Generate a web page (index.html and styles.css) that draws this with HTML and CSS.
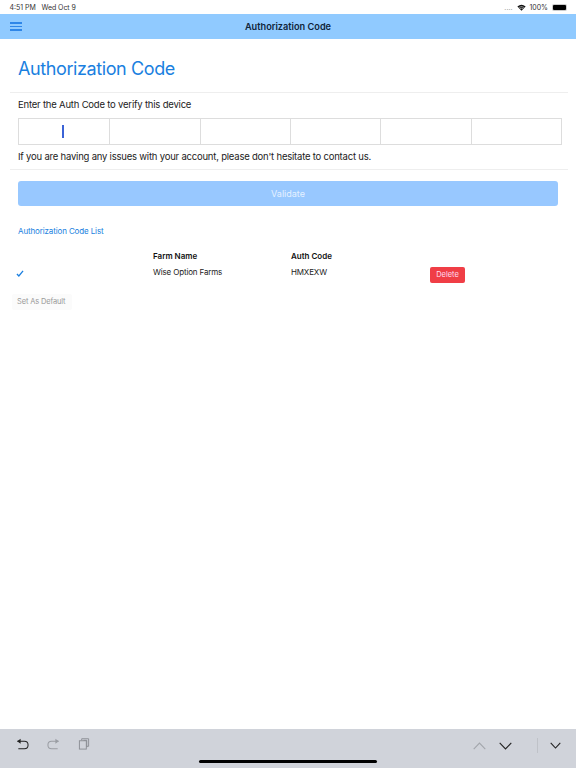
FILE: index.html
```html
<!DOCTYPE html>
<html lang="en">
<head>
<meta charset="UTF-8">
<title>Authorization Code</title>
<link rel="stylesheet" href="styles.css">
</head>
<body>
	<div class="status">
		<span class="clock">4:51 PM</span>
		<span class="date">Wed Oct 9</span>
		<span class="status-right">
			<span class="dots">....</span>
			<svg class="wifi" width="9" height="7" viewBox="0 0 20 16"><path d="M10 15.5 L0.5 5.5 Q10 -2.5 19.5 5.5 Z" fill="#111"/><path d="M3.6 8.2 Q10 3.4 16.4 8.2 M6.3 11 Q10 8.2 13.7 11" stroke="#fff" stroke-width="1.2" fill="none"/></svg>
			<span class="pct">100%</span>
			<span class="battery"><span class="battery-fill"></span></span>
		</span>
	</div>
	<div class="header">
		<div class="burger"><i></i><i></i><i></i></div>
		<div class="header-title">Authorization Code</div>
	</div>
	<div class="main">
		<h1>Authorization Code</h1>
		<div class="rule"></div>
		<p class="label">Enter the Auth Code to verify this device</p>
		<div class="code-boxes">
			<div class="box"><span class="caret"></span></div>
			<div class="box"></div>
			<div class="box"></div>
			<div class="box"></div>
			<div class="box"></div>
			<div class="box"></div>
		</div>
		<p class="help">If you are having any issues with your account, please don't hesitate to contact us.</p>
		<div class="rule"></div>
		<div class="validate">Validate</div>
		<div class="list-title">Authorization Code List</div>
		<div class="code-table">
			<div class="cell"></div>
			<div class="cell head">Farm Name</div>
			<div class="cell head">Auth Code</div>
			<div class="cell"></div>
			<div class="cell check">
				<svg width="8" height="7" viewBox="0 0 9 8"><path d="M1 4.6 L3.2 6.8 L8 1" stroke="#1a7fe0" stroke-width="1.5" fill="none"/></svg>
			</div>
			<div class="cell">Wise Option Farms</div>
			<div class="cell">HMXEXW</div>
			<div class="cell"><span class="delete">Delete</span></div>
		</div>
		<div class="set-default">Set As Default</div>
	</div>
	<div class="toolbar">
		<div class="tools-left">
			<svg width="13" height="13" viewBox="0 0 14 14"><path d="M1.5 3.5 H9 Q13 3.5 13 7.5 Q13 11.5 9 11.5 H2.5" stroke="#222" stroke-width="1.1" fill="none"/><path d="M5 0.8 L1.2 3.5 L5 6.2 Z" fill="#222"/></svg>
			<svg width="13" height="13" viewBox="0 0 14 14"><path d="M12.5 3.5 H5 Q1 3.5 1 7.5 Q1 11.5 5 11.5 H11.5" stroke="#9a9da3" stroke-width="1.1" fill="none"/><path d="M9 0.8 L12.8 3.5 L9 6.2 Z" fill="#9a9da3"/></svg>
			<svg width="12" height="12" viewBox="0 0 12 13"><path d="M3.5 2.5 V0.8 H11 V9 H9" stroke="#8a8d93" fill="none"/><path d="M5.5 2.5 H9 V10" stroke="#8a8d93" fill="none"/><rect x="1" y="3" width="7.5" height="9" stroke="#8a8d93" fill="none"/></svg>
		</div>
		<div class="tools-right">
			<svg class="arrow" width="13" height="8" viewBox="0 0 13 8"><path d="M0.7 7.2 L6.5 1 L12.3 7.2" stroke="#a3a6ac" stroke-width="1.1" fill="none"/></svg>
			<svg class="arrow" width="13" height="8" viewBox="0 0 13 8"><path d="M0.7 0.8 L6.5 7 L12.3 0.8" stroke="#222" stroke-width="1.1" fill="none"/></svg>
			<span class="divider"></span>
			<svg class="arrow last" width="11" height="7" viewBox="0 0 11 7"><path d="M0.7 0.8 L5.5 6 L10.3 0.8" stroke="#222" stroke-width="1.1" fill="none"/></svg>
		</div>
		<div class="home-bar"></div>
	</div>
</body>
</html>
```

FILE: styles.css
```css
* {
	box-sizing: border-box;
}
html, body {
	height: 100%;
}
body {
	margin: 0;
	background: #fff;
	color: #222;
	font-family: Inter, "Liberation Sans", sans-serif;
	display: flex;
	flex-direction: column;
	overflow: hidden;
}
.status {
	height: 14px;
	padding: 0 9px 0 9.5px;
	display: flex;
	align-items: center;
	font-size: 7px;
	color: #333;
	flex: none;
}
.date {
	margin-left: 5.5px;
	letter-spacing: -0.05px;
}
.status-right {
	margin-left: auto;
	display: flex;
	align-items: center;
	gap: 3px;
}
.dots {
	color: #999;
	margin-right: 2px;
}
.battery {
	width: 15px;
	height: 7px;
	padding: 1px;
	border-radius: 2px;
	background: #ccc;
	margin-left: 1px;
}
.battery-fill {
	display: block;
	height: 100%;
	background: #000;
	border-radius: 1px;
}
.header {
	height: 25px;
	flex: none;
	background: #90caff;
	position: relative;
	display: flex;
	align-items: center;
	justify-content: center;
}
.header-title {
	font-size: 9.2px;
	font-weight: 600;
	color: #10253a;
}
.burger {
	position: absolute;
	left: 10px;
	top: 8px;
	width: 12px;
}
.burger i {
	display: block;
	height: 1.5px;
	margin-bottom: 2px;
	background: #2f86e8;
}
.main {
	flex: 1;
	padding: 0 8px 0 10px;
}
h1 {
	margin: 0;
	padding: 18px 0 0 8px;
	height: 53px;
	font-size: 18px;
	line-height: 24px;
	font-weight: normal;
	letter-spacing: -0.4px;
	color: #1a7fe0;
}
.rule {
	height: 1px;
	background: #eee;
}
.label {
	margin: 0;
	padding: 6px 0 0 8px;
	height: 25px;
	font-size: 9.5px;
	line-height: 12px;
	letter-spacing: -0.2px;
}
.code-boxes {
	margin-left: 8px;
	width: 544px;
	height: 27px;
	display: grid;
	grid-template-columns: repeat(6, 1fr);
	border: 1px solid #ddd;
}
.box {
	border-left: 1px solid #ddd;
	display: flex;
	align-items: center;
	justify-content: center;
	padding-right: 3px;
}
.box:first-child {
	border-left: 0;
}
.caret {
	width: 2px;
	height: 13px;
	background: #3b63d6;
}
.help {
	margin: 0;
	padding: 6px 0 0 8px;
	height: 24px;
	font-size: 9.5px;
	line-height: 12px;
	letter-spacing: -0.21px;
}
.validate {
	margin: 11px 0 0 8px;
	width: 540px;
	height: 25px;
	line-height: 25px;
	border-radius: 3px;
	background: #98c8ff;
	color: #e4f1ff;
	text-align: center;
	font-size: 9px;
}
.list-title {
	margin: 19px 0 0 8px;
	font-size: 8px;
	line-height: 12px;
	letter-spacing: -0.13px;
	color: #1a7fe0;
}
.code-table {
	margin-top: 13px;
	display: grid;
	grid-template-columns: 143px 138px 139px 40px;
	grid-template-rows: 12px 20px;
	row-gap: 4px;
	font-size: 8px;
	line-height: 12px;
	letter-spacing: -0.15px;
}
.head {
	font-weight: 600;
	letter-spacing: 0;
	color: #111;
}
.check {
	padding: 2px 0 0 6px;
}
.delete {
	display: block;
	width: 35px;
	height: 16px;
	line-height: 16px;
	margin-top: 1px;
	border-radius: 2px;
	background: #f03e46;
	color: #fde;
	font-size: 7.5px;
	letter-spacing: 0;
	text-align: center;
}
.set-default {
	margin: 8px 0 0 2px;
	width: 60px;
	height: 16px;
	line-height: 16px;
	padding-left: 5px;
	font-size: 7.5px;
	letter-spacing: -0.15px;
	color: #999;
	background: #fbfbfb;
	border-radius: 2px;
}
.toolbar {
	height: 39px;
	flex: none;
	background: #d0d3da;
	position: relative;
	display: flex;
	justify-content: space-between;
	padding: 9px 15px 0 16px;
}
.tools-left {
	display: flex;
	gap: 18px;
	align-items: flex-start;
}
.tools-right {
	display: flex;
	align-items: flex-start;
}
.arrow {
	margin-top: 4px;
	margin-left: 13px;
}
.arrow.last {
	margin-left: 12px;
}
.divider {
	width: 1px;
	height: 15px;
	background: #bfc2c8;
	margin-left: 25px;
	margin-right: 0;
}
.home-bar {
	position: absolute;
	left: 199px;
	bottom: 5px;
	width: 178px;
	height: 3px;
	border-radius: 2px;
	background: #000;
}
```
